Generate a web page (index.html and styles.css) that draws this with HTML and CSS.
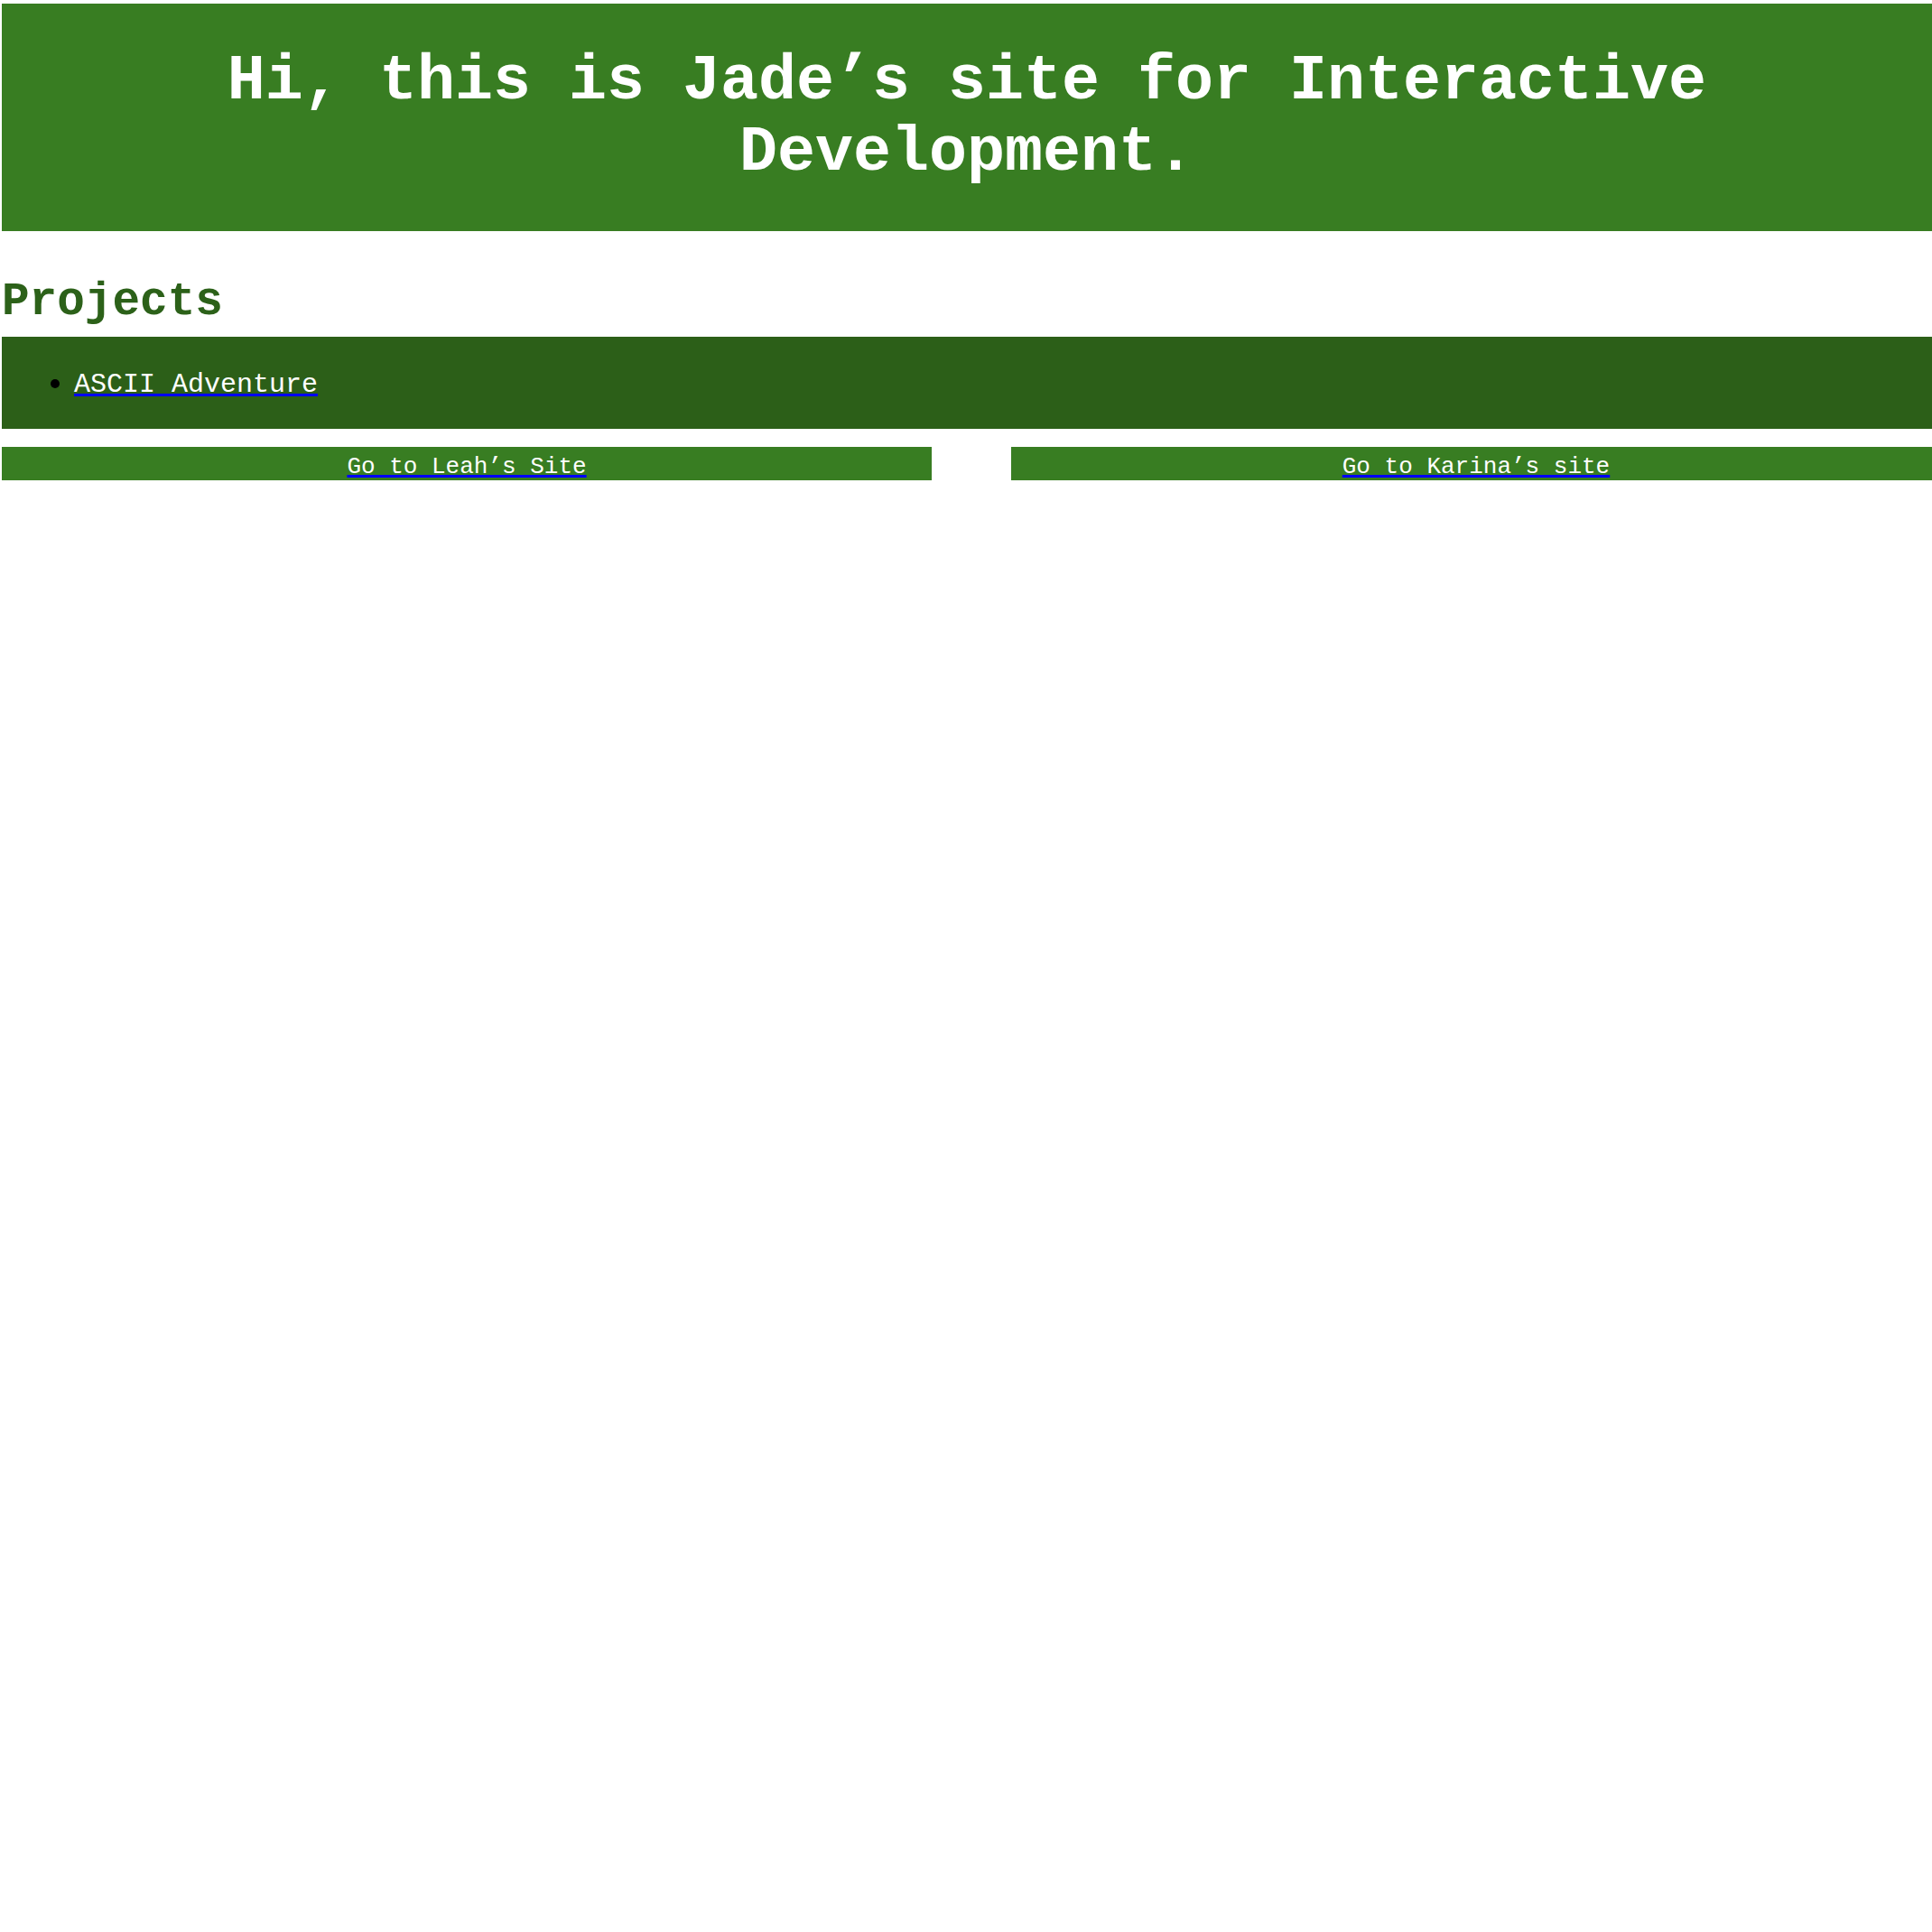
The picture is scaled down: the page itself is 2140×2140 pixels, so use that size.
FILE: index.html
```html
<!DOCTYPE html>
<html lang="en">
<head>
<meta charset="utf-8">
<title>Jade's site</title>
<link rel="stylesheet" href="styles.css">
</head>
<body>
<header class="hero">
  <h1 class="hero-title">Hi, this is Jade’s site for Interactive Development.</h1>
</header>
<h2 class="section-title">Projects</h2>
<ul class="project-list">
  <li class="project-item"><a class="link" href="#">ASCII Adventure</a></li>
</ul>
<nav class="site-nav">
  <div class="nav-btn"><a class="link" href="#">Go to Leah’s Site</a></div>
  <div class="nav-btn"><a class="link" href="#">Go to Karina’s site</a></div>
</nav>
</body>
</html>
```
FILE: styles.css
```css
html, body {
  background: #ffffff;
}
body {
  margin: 0;
  padding: 4px 0 0 2px;
  font-family: "Liberation Mono", "Courier New", monospace;
  overflow-x: hidden;
}
.hero {
  display: flow-root;
  background: #387d22;
  color: #ffffff;
}
.hero-title {
  font-size: 70px;
  font-weight: bold;
  text-align: center;
  margin: 0.67em 0;
}
.section-title {
  font-size: 51px;
  font-weight: bold;
  color: #2c6119;
  margin: 50px 0 10px;
}
.project-list {
  background: #2c5f18;
  margin: 0;
  padding: 36px 0 32px 80px;
  font-size: 30px;
  color: #000000;
  list-style: none;
}
.project-item {
  position: relative;
}
.project-item::before {
  content: "";
  position: absolute;
  left: -26px;
  top: 11px;
  width: 10px;
  height: 10px;
  border-radius: 50%;
  background: #000000;
}
.link {
  color: #ffffff;
  text-decoration: underline;
  text-decoration-color: #0000ff;
  text-decoration-thickness: 3px;
}
.site-nav {
  display: flex;
  gap: 88px;
  margin-top: 20px;
  overflow: hidden;
}
.nav-btn {
  flex: 0 0 1030px;
  background: #387d22;
  text-align: center;
  font-size: 26px;
  padding: 7px 0 0;
  box-sizing: border-box;
  height: 37px;
}
```
